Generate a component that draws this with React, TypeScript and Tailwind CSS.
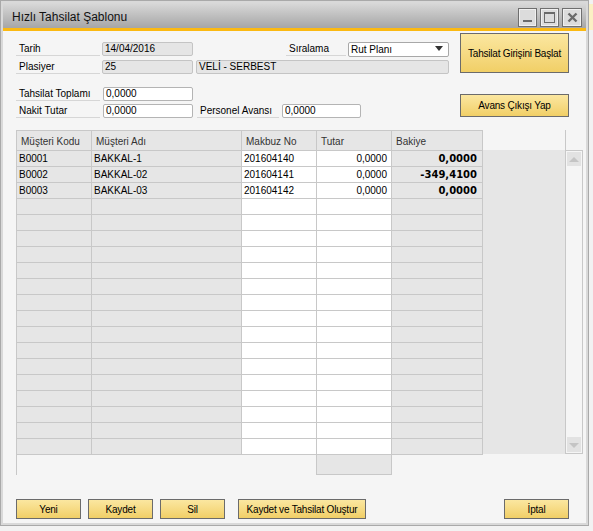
import React from "react";

const rows = [
  { kod: "B0001", ad: "BAKKAL-1", makbuz: "201604140", tutar: "0,0000", bakiye: "0,0000" },
  { kod: "B0002", ad: "BAKKAL-02", makbuz: "201604141", tutar: "0,0000", bakiye: "-349,4100" },
  { kod: "B0003", ad: "BAKKAL-03", makbuz: "201604142", tutar: "0,0000", bakiye: "0,0000" },
];

const allRows = Array.from({ length: 19 }, (_, i) => rows[i] ?? null);

function Label({ text, w }: { text: string; w: string }) {
  return (
    <div className={`${w} h-[14px] border-b border-[#d6d6d6] pl-[3px] leading-[13px] text-black`}>{text}</div>
  );
}

function YButton({ text, cls }: { text: string; cls: string }) {
  return (
    <div
      className={`${cls} flex items-center justify-center border border-[#6b6b6b] bg-gradient-to-b from-[#fbe7a0] to-[#f1cf66] text-black tracking-[-0.2px]`}
    >
      {text}
    </div>
  );
}

export default function App() {
  return (
    <div className="w-[593px] h-[531px] bg-[#f2f2f2] font-['Liberation_Sans',Arial,sans-serif] text-[10px] text-black relative overflow-hidden">
      <div className="absolute right-0 top-[4px] w-[4px] h-[26px] bg-[#fbf0c4]" />
      <div className="w-[589px] h-[526px] border border-[#a9a9a9] bg-[#d9d9d9] p-[2px] flex flex-col">
        {/* title bar */}
        <div className="h-[25px] shrink-0 bg-gradient-to-b from-[#d9d9d9] to-[#a6a6a6] flex items-center pl-[9px] pr-[4px]">
          <div className="text-[12px] text-[#111] flex-1 pt-[2px]">Hızlı Tahsilat Şablonu</div>
          <div className="flex gap-[3px] pt-[3px]">
            <div className="w-[19px] h-[19px] border border-[#6f6f6f] bg-[#dcdcdc] shadow-[inset_0_0_0_1px_#f0f0f0] flex items-end justify-center pb-[4px]">
              <div className="w-[9px] h-[2px] bg-[#6a6a6a]" />
            </div>
            <div className="w-[19px] h-[19px] border border-[#6f6f6f] bg-[#dcdcdc] shadow-[inset_0_0_0_1px_#f0f0f0] flex items-center justify-center">
              <div className="w-[11px] h-[11px] border border-[#6a6a6a] border-t-2" />
            </div>
            <div className="w-[20px] h-[19px] border border-[#6f6f6f] bg-[#dcdcdc] shadow-[inset_0_0_0_1px_#f0f0f0] flex items-center justify-center">
              <svg width="11" height="11" viewBox="0 0 11 11">
                <path d="M1.5 1.5 L9.5 9.5 M9.5 1.5 L1.5 9.5" stroke="#6a6a6a" strokeWidth="2.4" />
              </svg>
            </div>
          </div>
        </div>
        <div className="h-[3px] shrink-0 bg-[#fbb912]" />
        {/* content */}
        <div className="flex-1 bg-[#f5f5f5] pl-[13px] flex flex-col">
          <div className="flex items-start">
            {/* left */}
            <div className="w-[433px] pt-[11px] flex flex-col">
              <div className="flex h-[14px]">
                <Label text="Tarih" w="w-[84px]" />
                <div className="ml-[2px] w-[91px] h-[14px] bg-[#e5e5e5] border border-[#c4c4c4] rounded-[2px] pl-[2px] leading-[12px]">14/04/2016</div>
                <div className="w-[93px]" />
                <Label text="Sıralama" w="w-[60px]" />
                <div className="ml-[2px] w-[101px] h-[15px] bg-white border border-[#a8a8a8] rounded-[2px] pl-[2px] leading-[13px] flex justify-between">
                  <span>Rut Planı</span>
                  <svg width="10" height="10" viewBox="0 0 10 10" className="mr-[4px] mt-[1px]">
                    <path d="M1 2 L9 2 L5 7 Z" fill="#333" />
                  </svg>
                </div>
              </div>
              <div className="flex h-[14px] mt-[4px]">
                <Label text="Plasiyer" w="w-[84px]" />
                <div className="ml-[2px] w-[91px] h-[14px] bg-[#e5e5e5] border border-[#c4c4c4] rounded-[2px] pl-[2px] leading-[12px]">25</div>
                <div className="ml-[3px] w-[253px] h-[14px] bg-[#e5e5e5] border border-[#c4c4c4] rounded-[2px] pl-[2px] leading-[12px]">VELİ - SERBEST</div>
              </div>
              <div className="flex h-[14px] mt-[13px]">
                <Label text="Tahsilat Toplamı" w="w-[84px]" />
                <div className="ml-[3px] w-[90px] h-[14px] bg-white border border-[#b4b4b4] rounded-[2px] pl-[2px] leading-[12px]">0,0000</div>
              </div>
              <div className="flex h-[14px] mt-[3px]">
                <Label text="Nakit Tutar" w="w-[84px]" />
                <div className="ml-[3px] w-[90px] h-[14px] bg-white border border-[#b4b4b4] rounded-[2px] pl-[2px] leading-[12px]">0,0000</div>
                <div className="ml-[4px]" />
                <Label text="Personel Avansı" w="w-[82px]" />
                <div className="ml-[3px] w-[79px] h-[14px] bg-white border border-[#b4b4b4] rounded-[2px] pl-[2px] leading-[12px]">0,0000</div>
              </div>
            </div>
            {/* right */}
            <div className="ml-[11px] pt-[2px] flex flex-col">
              <YButton text="Tahsilat Girişini Başlat" cls="w-[109px] h-[40px]" />
              <YButton text="Avans Çıkışı Yap" cls="mt-[21px] w-[109px] h-[23px]" />
            </div>
          </div>

          {/* grid */}
          <div className="mt-[12px] flex">
            <div className="w-[467px] border-l border-t border-[#c8c8c8] flex flex-col">
              <div className="flex h-[20px] bg-[#e6e6e6]">
                <div className="w-[75px] border-r border-b border-[#c8c8c8] pl-[4px] pt-[3px] text-[#333]">Müşteri Kodu</div>
                <div className="w-[150px] border-r border-b border-[#c8c8c8] pl-[4px] pt-[3px] text-[#333]">Müşteri Adı</div>
                <div className="w-[75px] border-r border-b border-[#c8c8c8] pl-[4px] pt-[3px] text-[#333]">Makbuz No</div>
                <div className="w-[75px] border-r border-b border-[#c8c8c8] pl-[4px] pt-[3px] text-[#333]">Tutar</div>
                <div className="w-[91px] border-r border-b border-[#c8c8c8] pl-[4px] pt-[3px] text-[#333]">Bakiye</div>
              </div>
              {allRows.map((r, i) => (
                <div key={i} className="flex h-[16px] leading-[15px]">
                  <div className="w-[75px] bg-[#e6e6e6] border-r border-b border-[#c8c8c8] pl-[2px]">{r?.kod}</div>
                  <div className="w-[150px] bg-[#e6e6e6] border-r border-b border-[#c8c8c8] pl-[2px]">{r?.ad}</div>
                  <div className="w-[75px] bg-white border-r border-b border-[#c8c8c8] pl-[2px]">{r?.makbuz}</div>
                  <div className="w-[75px] bg-white border-r border-b border-[#c8c8c8] pr-[4px] text-right">{r?.tutar}</div>
                  <div className="w-[91px] bg-[#e6e6e6] border-r border-b border-[#c8c8c8] pr-[5px] text-right font-['DejaVu_Sans',sans-serif] font-bold text-[10px]">{r?.bakiye}</div>
                </div>
              ))}
              <div className="flex">
                <div className="w-[299px]" />
                <div className="w-[76px] h-[20px] bg-[#e6e6e6] border-l border-r border-b border-[#c8c8c8]" />
              </div>
            </div>
            <div className="w-[83px] flex flex-col">
              <div className="h-[20px] border-r border-[#c8c8c8]" />
              <div className="h-[304px] bg-[#e6e6e6] border-r border-[#c8c8c8]" />
            </div>
            <div className="w-[17px] flex flex-col">
              <div className="h-[20px]" />
              <div className="h-[304px] border-t border-b border-r border-[#c8c8c8] flex flex-col justify-between p-[1px]">
                <div className="h-[14px] bg-[#e2e2e2] flex items-center justify-center">
                  <svg width="10" height="6" viewBox="0 0 10 6"><path d="M0 6 L5 1 L10 6 Z" fill="#c4c4c4" /></svg>
                </div>
                <div className="h-[15px] bg-[#e2e2e2] flex items-center justify-center">
                  <svg width="10" height="6" viewBox="0 0 10 6"><path d="M0 1 L10 1 L5 6 Z" fill="#c4c4c4" /></svg>
                </div>
              </div>
            </div>
          </div>

          {/* bottom buttons */}
          <div className="mt-[24px] flex">
            <YButton text="Yeni" cls="w-[65px] h-[20px]" />
            <YButton text="Kaydet" cls="ml-[7px] w-[65px] h-[20px]" />
            <YButton text="Sil" cls="ml-[7px] w-[65px] h-[20px]" />
            <YButton text="Kaydet ve Tahsilat Oluştur" cls="ml-[13px] w-[128px] h-[20px]" />
            <div className="w-[138px]" />
            <YButton text="İptal" cls="w-[65px] h-[20px]" />
          </div>
        </div>
      </div>
    </div>
  );
}
